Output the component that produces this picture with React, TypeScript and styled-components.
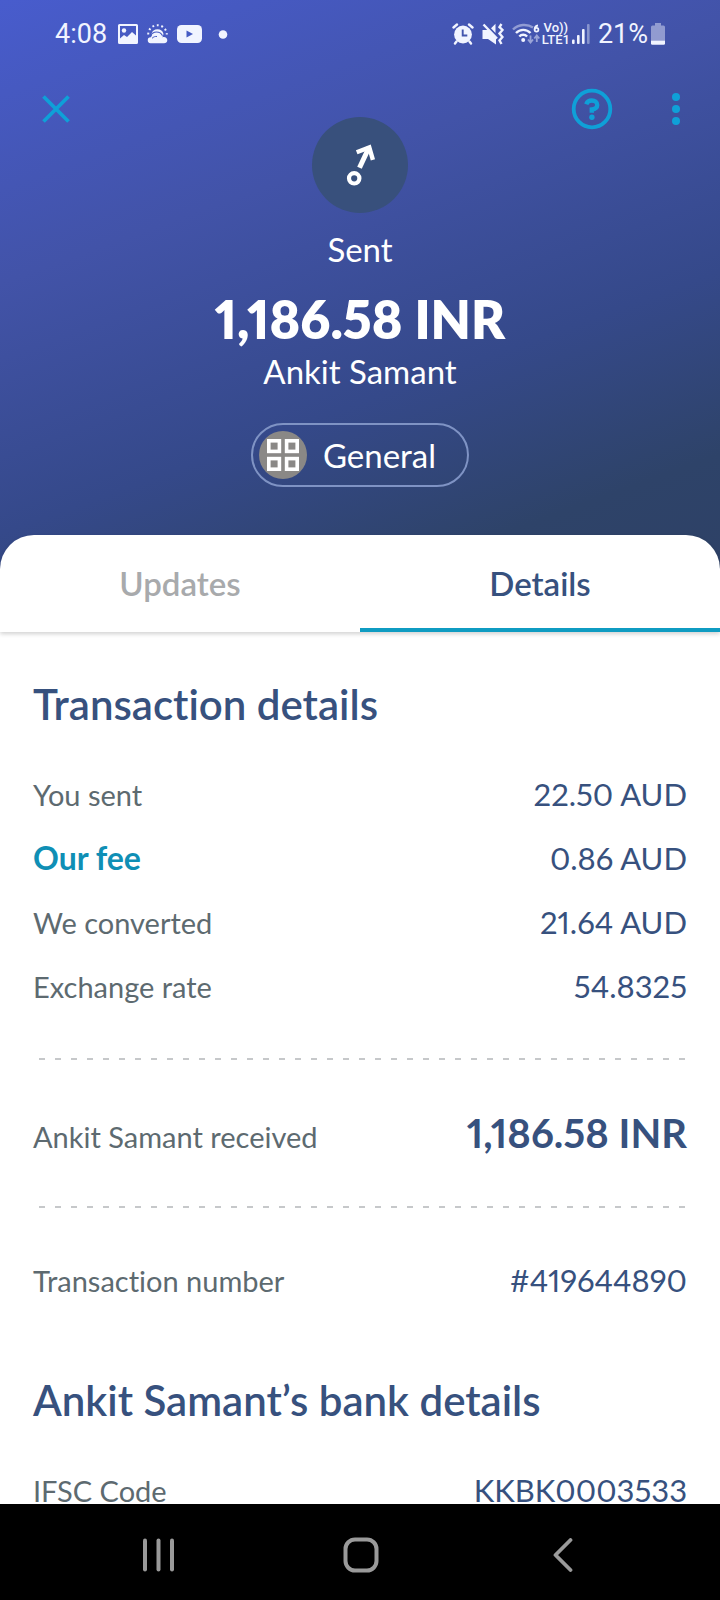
import React, { useState } from "react";
import styled, { createGlobalStyle } from "styled-components";

const color = {
  navy: "#37517e",
  text: "#5d6a70",
  accent: "#0fa0d8",
  link: "#0f8fb5",
  tabLine: "#0f9cc2",
  muted: "#a8aaac",
  dash: "#c6c8ca",
  nav: "#9a9a9a",
};

const GlobalStyle = createGlobalStyle`
  *, *::before, *::after { box-sizing: border-box; }
  html, body { margin: 0; padding: 0; }
  body {
    background: #000;
    font-family: Lato, "Open Sans", sans-serif;
    font-variant-ligatures: none;
    font-variant-numeric: proportional-nums;
  }
  h1, h2, p, dl, dd, dt { margin: 0; }
  button { font: inherit; color: inherit; background: none; border: 0; padding: 0; cursor: pointer; }
  svg { display: block; flex: none; }
`;

const Screen = styled.div`
  display: flex;
  flex-direction: column;
  height: 100vh;
  background: #fff;
`;

const Scroll = styled.main`
  flex: 1;
  min-height: 0;
  overflow-y: auto;
  scrollbar-width: none;
`;

const Hero = styled.header`
  color: #fff;
  padding-bottom: 84px;
  background: linear-gradient(160deg, #485ccd 0%, #4253a8 34%, #35498a 64%, #2e4369 86%, #2e4166 100%);
`;

const StatusBar = styled.div`
  display: flex;
  justify-content: space-between;
  align-items: center;
  height: 68px;
  padding: 0 55px;
  color: #f1f4ff;
  font: 400 27px/32px Roboto, sans-serif;
`;

const StatusGroup = styled.div<{ $gap: number }>`
  display: flex;
  align-items: center;
  gap: ${(p) => p.$gap}px;
`;

const Volte = styled.span`
  display: flex;
  flex-direction: column;
  align-items: center;
  font: 500 13px/12px Roboto, sans-serif;
`;

const Toolbar = styled.div`
  display: flex;
  align-items: flex-start;
  justify-content: space-between;
  padding: 0 24px 0 36px;
  height: 49px;
  color: ${color.accent};
`;

const ToolbarActions = styled.div`
  display: flex;
  gap: 44px;
`;

const IconButton = styled.button`
  display: flex;
  align-items: center;
  justify-content: center;
  width: 40px;
  height: 82px;
`;

const Summary = styled.section`
  display: flex;
  flex-direction: column;
  align-items: center;
`;

const Badge = styled.div`
  display: flex;
  align-items: center;
  justify-content: center;
  width: 96px;
  height: 96px;
  border-radius: 50%;
  background: #38507c;
`;

const SummaryText = styled.p`
  font-size: 33px;
  line-height: 40px;
`;

const Status = styled(SummaryText)`
  margin-top: 16px;
`;

const Amount = styled.h1`
  margin-top: 18px;
  font-size: 52px;
  line-height: 64px;
  font-weight: 800;
`;

const Category = styled.button`
  display: flex;
  align-items: center;
  gap: 16px;
  height: 64px;
  margin-top: 32px;
  padding: 0 31px 0 6px;
  border: 2px solid #7f93c4;
  border-radius: 32px;
  font-size: 33px;
`;

const CategoryIcon = styled.span`
  display: flex;
  align-items: center;
  justify-content: center;
  width: 48px;
  height: 48px;
  border-radius: 50%;
  background: #8a8886;
`;

const Sheet = styled.section`
  position: relative;
  margin-top: -36px;
  border-radius: 34px 34px 0 0;
  background: #fff;
`;

const Tabs = styled.div`
  display: flex;
  height: 97px;
  box-shadow: 0 2px 4px rgba(0, 0, 0, 0.18);
  border-radius: 34px 34px 0 0;
`;

const Tab = styled.button<{ $active: boolean }>`
  flex: 1;
  padding-top: 2px;
  border-bottom: 4px solid ${(p) => (p.$active ? color.tabLine : "transparent")};
  color: ${(p) => (p.$active ? color.navy : color.muted)};
  font-size: 33px;
  font-weight: 600;
`;

const Panel = styled.div`
  padding: 48px 33px;
`;

const Heading = styled.h2`
  color: ${color.navy};
  font-size: 42px;
  line-height: 48px;
  font-weight: 600;
`;

const BankHeading = styled(Heading)`
  margin-top: 64px;
`;

const Rows = styled.dl`
  padding-top: 34px;
`;

const Row = styled.div<{ $total?: boolean }>`
  display: flex;
  align-items: baseline;
  justify-content: space-between;
  line-height: ${(p) => (p.$total ? 66 : 64)}px;
  height: ${(p) => (p.$total ? 66 : 64)}px;
`;

const Label = styled.dt`
  color: ${color.text};
  font-size: 29px;
`;

const FeeLink = styled.a`
  color: ${color.link};
  font-size: 32px;
  font-weight: 700;
  text-decoration: none;
`;

const Value = styled.dd<{ $strong?: boolean }>`
  color: ${color.navy};
  font-size: ${(p) => (p.$strong ? 40 : 31)}px;
  font-weight: ${(p) => (p.$strong ? 700 : 400)};
`;

const Dashes = styled.hr`
  height: 2px;
  margin: 40px 0 40px 6px;
  border: 0;
  background: repeating-linear-gradient(90deg, ${color.dash} 0 6px, transparent 6px 16px);
`;

const NavBar = styled.nav`
  display: flex;
  justify-content: space-around;
  align-items: center;
  height: 96px;
  padding: 0 56px 0 58px;
  background: #000;
  color: ${color.nav};
`;

const NavButton = styled.button`
  display: flex;
  align-items: center;
  justify-content: center;
  width: 96px;
  height: 96px;
  padding-top: 6px;
`;

const PictureIcon = () => (
  <svg width="20" height="20" viewBox="0 0 20 20">
    <path fill="currentColor" fillRule="evenodd" d="M1.5 0h17A1.500 1.500 0 0 1 20 1.500v17a1.500 1.500 0 0 1-1.500 1.500h-17A1.500 1.500 0 0 1 0 18.500v-17A1.500 1.500 0 0 1 1.500 0zM2 2v12.500l4-3.500 3 2 5-5 4 3.500V2z" />
    <circle cx="6" cy="6.500" r="2.200" fill="currentColor" />
  </svg>
);

const WeatherIcon = () => (
  <svg width="21" height="20" viewBox="0 0 21 20" fill="none" stroke="currentColor">
    <path strokeWidth="2" strokeDasharray="1.900 2.700" d="M1.200 10.500a9.300 9.300 0 0 1 18.600 0" />
    <path fill="currentColor" stroke="none" d="M4.500 10a6.200 6.200 0 0 1 12 0l-1 3-10 0z" />
    <path stroke="#465bc3" strokeWidth="1.200" d="M3.500 12c1.200-2.600 3.500-4 6-4 2.800 0 4.900 1.400 6 3.700" />
    <path fill="currentColor" stroke="none" d="M3.600 19.200a3 3 0 0 1 .3-6c1.200-2.600 3.200-4 5.600-4 2.600 0 4.600 1.500 5.700 4 3-.8 5.100.6 5.100 3 0 1.800-1.400 3-3.300 3z" />
    <path stroke="#465bc3" strokeWidth="1" d="M5 14.300c1.500-1.500 3.300-2.100 5-1.800" />
  </svg>
);

const VideoIcon = () => (
  <svg width="25" height="18" viewBox="0 0 25 18">
    <rect width="25" height="18" rx="4.500" fill="currentColor" />
    <path fill="#465bc3" d="M9.500 5.500v7l6.500-3.500z" />
  </svg>
);

const DotIcon = () => (
  <svg width="26" height="9" viewBox="0 0 26 9">
    <circle cx="12" cy="4.500" r="4.300" fill="currentColor" />
  </svg>
);

const AlarmIcon = () => (
  <svg width="22" height="22" viewBox="0 0 22 22" fill="none" stroke="currentColor" strokeWidth="2.400" strokeLinecap="round">
    <circle cx="11" cy="11.500" r="8.900" fill="currentColor" stroke="none" />
    <path d="M1.500 4.500 5 1.500M20.500 4.500 17 1.500M4.500 18.500 3 20.500M17.500 18.500 19 20.500" />
    <path stroke="#4255ad" strokeWidth="1.900" strokeLinecap="butt" d="M10.700 6.500v6h4.600" />
  </svg>
);

const MuteVibrateIcon = () => (
  <svg width="22" height="22" viewBox="0 0 22 22">
    <path fill="currentColor" d="M.5 7H6l8 8v6.500L6 16H.500zM9 5.200 13.500.8V10z" />
    <path fill="none" stroke="currentColor" strokeWidth="2.400" d="M1.500 1.500 15 15.500M19.500 1l-2 3 3 3-3 3.500 3 3.500-3 3.500 2 3.500" />
  </svg>
);

const WifiIcon = () => (
  <svg width="28" height="22" viewBox="0 0 28 22" fill="none" stroke="currentColor">
    <path strokeWidth="2.400" opacity=".45" d="M1 6.500C6.500.8 15.500.8 21 4.500" />
    <path strokeWidth="2.400" d="M4 10c4-4.200 10.500-4.200 14.500 0M7.300 13.500c2.200-2.300 5.600-2.300 7.800 0" />
    <circle cx="11.200" cy="17" r="2" fill="currentColor" stroke="none" />
    <path strokeWidth="1.900" d="M26 2.500c-2.300.2-3.300 1.800-3.300 4" />
    <circle cx="24.500" cy="6.800" r="1.900" strokeWidth="1.700" />
    <path strokeWidth="1.800" opacity=".5" d="M18.500 12.500v7M16 16.500l2.500 3 2.500-3M24.800 19v-6M22.300 15.500l2.500-3 2.500 3" />
  </svg>
);

const SignalIcon = () => (
  <svg width="18" height="20" viewBox="0 0 18 20" fill="currentColor">
    <rect y="15.500" width="2.600" height="4.500" rx="1" />
    <rect x="5" y="11" width="2.600" height="9" rx="1" />
    <rect x="10" y="5" width="2.600" height="15" rx="1" />
    <rect x="15" width="2.600" height="20" rx="1" opacity=".4" />
  </svg>
);

const BatteryIcon = () => (
  <svg width="14" height="22" viewBox="0 0 14 22" fill="currentColor">
    <path opacity=".45" d="M4 0h6v2.500h2.500A1.500 1.500 0 0 1 14 4v13.500H0V4a1.500 1.500 0 0 1 1.500-1.500H4z" />
    <path d="M0 17.500h14v3a1.300 1.300 0 0 1-1.300 1.300H1.300A1.300 1.300 0 0 1 0 20.500z" />
  </svg>
);

const CloseIcon = () => (
  <svg width="28" height="28" viewBox="0 0 28 28" fill="none" stroke="currentColor" strokeWidth="3.800">
    <path d="M1.500 1.500 26.500 26.500M26.500 1.500 1.500 26.500" />
  </svg>
);

const HelpIcon = () => (
  <svg width="42" height="42" viewBox="0 0 42 42" fill="none" stroke="currentColor" strokeWidth="3.800">
    <circle cx="21" cy="21" r="18.300" />
    <path strokeWidth="4.400" d="M15.200 16.200c1-2.500 3-3.700 5.600-3.700 3.200 0 5.400 1.800 5.400 4.400 0 3-2.400 4.200-5.400 4.600v3.300" />
    <circle cx="20.900" cy="29.200" r="2.700" fill="currentColor" stroke="none" />
  </svg>
);

const MoreIcon = () => (
  <svg width="8" height="34" viewBox="0 0 8 34" fill="currentColor">
    <circle cx="4" cy="5" r="4" />
    <circle cx="4" cy="17" r="4" />
    <circle cx="4" cy="29" r="4" />
  </svg>
);

const SendIcon = () => (
  <svg width="96" height="96" viewBox="0 0 96 96" fill="none" stroke="#fff">
    <circle cx="42.200" cy="61.300" r="5.200" strokeWidth="4.200" />
    <path strokeWidth="5" d="M47.500 50.800 57 30.500" />
    <path strokeWidth="4.400" d="M44.700 35.300 57.300 30.500 60.900 42.800" />
  </svg>
);

const GridIcon = () => (
  <svg width="32" height="32" viewBox="0 0 32 32" fill="none" stroke="#fff" strokeWidth="3.600">
    <rect x="1.800" y="1.800" width="10.600" height="10.600" />
    <rect x="19.600" y="1.800" width="10.600" height="10.600" />
    <rect x="1.800" y="19.600" width="10.600" height="10.600" />
    <rect x="19.600" y="19.600" width="10.600" height="10.600" />
  </svg>
);

const RecentsIcon = () => (
  <svg width="32" height="34" viewBox="0 0 32 34" fill="currentColor">
    <rect width="4" height="33" y=".5" rx="2" />
    <rect x="13.500" width="4" height="33" y=".5" rx="2" />
    <rect x="27" width="4" height="33" y=".5" rx="2" />
  </svg>
);

const HomeIcon = () => (
  <svg width="36" height="36" viewBox="0 0 36 36" fill="none" stroke="currentColor" strokeWidth="4">
    <rect x="2.500" y="2.500" width="31" height="31" rx="9.500" />
  </svg>
);

const BackIcon = () => (
  <svg width="20" height="34" viewBox="0 0 20 34" fill="none" stroke="currentColor" strokeWidth="3.800" strokeLinecap="round" strokeLinejoin="round">
    <path d="M17.500 2 2.500 17l15 15" />
  </svg>
);

const amounts = [
  { label: "You sent", value: "22.50 AUD" },
  { label: "Our fee", value: "0.86 AUD", link: true },
  { label: "We converted", value: "21.64 AUD" },
  { label: "Exchange rate", value: "54.8325" },
];

export default function App() {
  const [tab, setTab] = useState("Details");

  return (
    <Screen>
      <GlobalStyle />
      <Scroll>
        <Hero>
          <StatusBar>
            <StatusGroup $gap={11}>
              <span>4:08</span>
              <StatusGroup $gap={9}>
                <PictureIcon />
                <WeatherIcon />
                <VideoIcon />
                <DotIcon />
              </StatusGroup>
            </StatusGroup>
            <StatusGroup $gap={8}>
              <AlarmIcon />
              <MuteVibrateIcon />
              <StatusGroup $gap={2}>
                <WifiIcon />
                <Volte>
                  <span>Vo))</span>
                  <span>LTE1</span>
                </Volte>
                <SignalIcon />
              </StatusGroup>
              <StatusGroup $gap={3}>
                <span>21%</span>
                <BatteryIcon />
              </StatusGroup>
            </StatusGroup>
          </StatusBar>
          <Toolbar>
            <IconButton aria-label="Close">
              <CloseIcon />
            </IconButton>
            <ToolbarActions>
              <IconButton aria-label="Help">
                <HelpIcon />
              </IconButton>
              <IconButton aria-label="More options">
                <MoreIcon />
              </IconButton>
            </ToolbarActions>
          </Toolbar>
          <Summary>
            <Badge>
              <SendIcon />
            </Badge>
            <Status>Sent</Status>
            <Amount>1,186.58 INR</Amount>
            <SummaryText>Ankit Samant</SummaryText>
            <Category>
              <CategoryIcon>
                <GridIcon />
              </CategoryIcon>
              General
            </Category>
          </Summary>
        </Hero>
        <Sheet>
          <Tabs role="tablist">
            {["Updates", "Details"].map((name) => (
              <Tab
                key={name}
                role="tab"
                aria-selected={tab === name}
                $active={tab === name}
                onClick={() => setTab(name)}
              >
                {name}
              </Tab>
            ))}
          </Tabs>
          <Panel role="tabpanel">
            <Heading>Transaction details</Heading>
            <Rows>
              {amounts.map((item) => (
                <Row key={item.label}>
                  <Label>{item.link ? <FeeLink href="#fee">{item.label}</FeeLink> : item.label}</Label>
                  <Value>{item.value}</Value>
                </Row>
              ))}
            </Rows>
            <Dashes />
            <dl>
              <Row $total>
                <Label>Ankit Samant received</Label>
                <Value $strong>1,186.58 INR</Value>
              </Row>
            </dl>
            <Dashes />
            <dl>
              <Row>
                <Label>Transaction number</Label>
                <Value>#419644890</Value>
              </Row>
            </dl>
            <BankHeading>Ankit Samant’s bank details</BankHeading>
            <Rows>
              <Row>
                <Label>IFSC Code</Label>
                <Value>KKBK0003533</Value>
              </Row>
            </Rows>
          </Panel>
        </Sheet>
      </Scroll>
      <NavBar aria-label="System navigation">
        <NavButton aria-label="Recent apps">
          <RecentsIcon />
        </NavButton>
        <NavButton aria-label="Home">
          <HomeIcon />
        </NavButton>
        <NavButton aria-label="Back">
          <BackIcon />
        </NavButton>
      </NavBar>
    </Screen>
  );
}
